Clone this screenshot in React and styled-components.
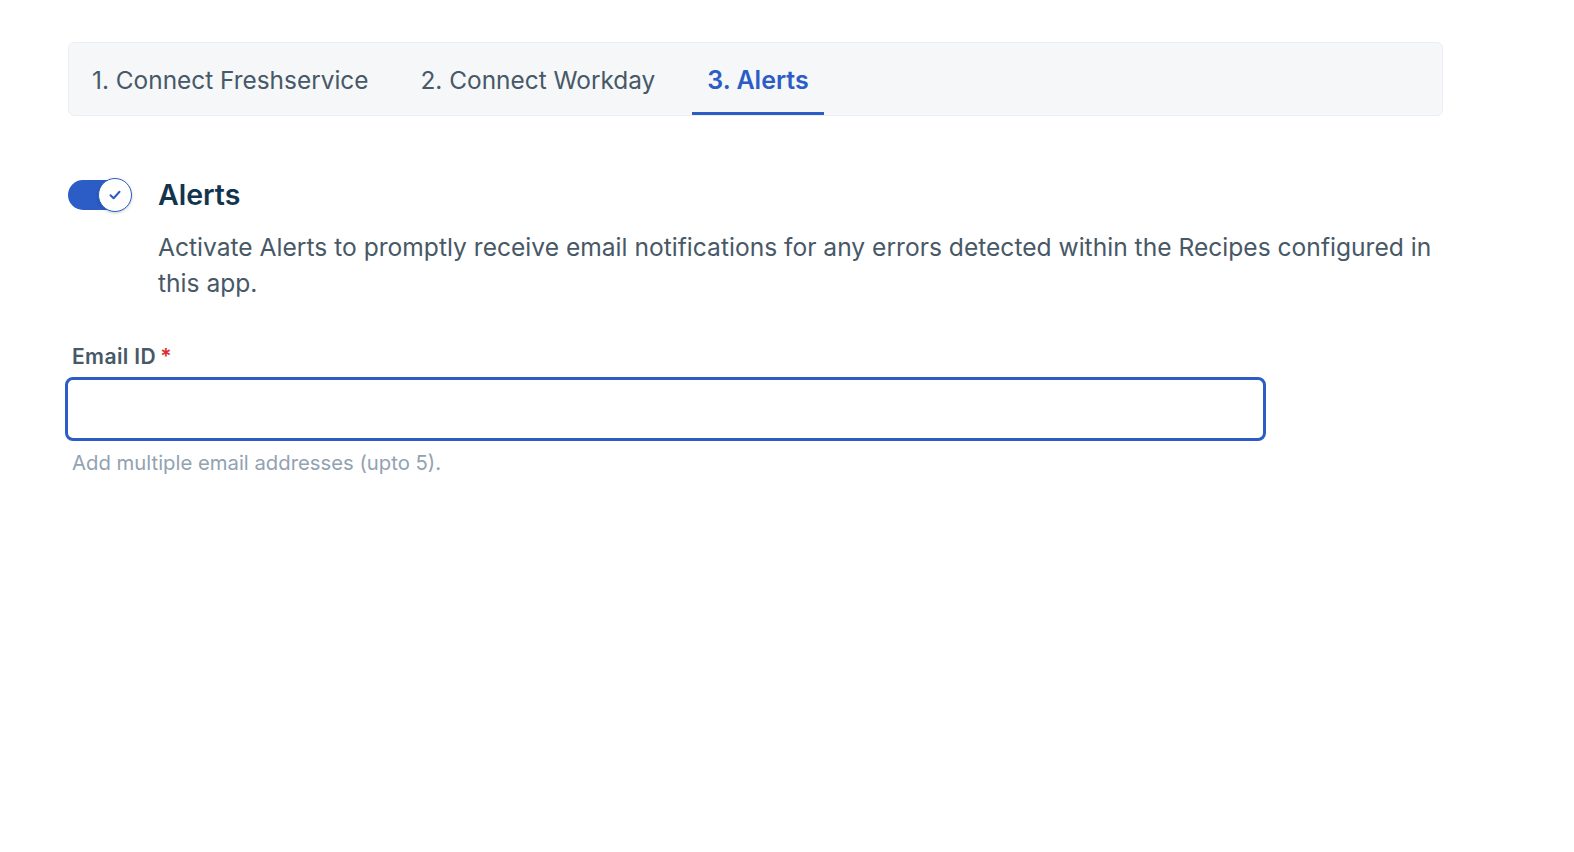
import React from "react";
import styled, { createGlobalStyle } from "styled-components";

const Global = createGlobalStyle`
  html, body { margin: 0; padding: 0; background: #fff; }
  body { font-family: Inter, "Noto Sans", sans-serif; -webkit-font-smoothing: antialiased; }
`;

const Page = styled.div`
  padding: 42px 131px 0 68px;
  display: flex;
  flex-direction: column;
`;

const TabBar = styled.div`
  display: flex;
  align-items: stretch;
  height: 72px;
  background: #f5f7f9;
  border: 1px solid #ebeff3;
  border-radius: 6px;
  padding-left: 8px;
  gap: 22px;
`;

const Tab = styled.div`
  display: flex;
  align-items: center;
  padding: 0 15px;
  font-size: ${(p) => (p.$active ? "25px" : "24.4px")};
  color: ${(p) => (p.$active ? "#2c5cc5" : "#475867")};
  font-weight: ${(p) => (p.$active ? 600 : 400)};
  border-bottom: 3px solid ${(p) => (p.$active ? "#2c5cc5" : "transparent")};
  padding-top: 4px;
`;

const Section = styled.div`
  display: grid;
  grid-template-columns: 90px 1fr;
  margin-top: 62px;
  padding-right: 6px;
`;

const Toggle = styled.div`
  position: relative;
  width: 60px;
  height: 30px;
  margin-top: 2px;
  border-radius: 15px;
  background: #2c5cc5;
`;

const Thumb = styled.div`
  position: absolute;
  right: -4px;
  top: -2px;
  width: 34px;
  height: 34px;
  border-radius: 50%;
  background: #fff;
  border: 1px solid #2c5cc5;
  box-sizing: border-box;
  box-shadow: 0 1px 3px rgba(18, 52, 77, 0.25);
  display: flex;
  align-items: center;
  justify-content: center;
`;

const Title = styled.div`
  font-size: 28.5px;
  font-weight: 600;
  color: #12344d;
  line-height: 34px;
`;

const Desc = styled.div`
  margin-top: 17px;
  font-size: 24.6px;
  line-height: 36px;
  color: #475867;
`;

const Field = styled.div`
  display: flex;
  flex-direction: column;
  margin-top: 43px;
  width: 1201px;
  margin-left: -3px;
`;

const Label = styled.label`
  font-size: 21px;
  letter-spacing: 0.4px;
  font-weight: 600;
  color: #475867;
  padding-left: 7px;
  line-height: 26px;
`;

const Req = styled.span`
  color: #d72d30;
  margin-left: 4px;
`;

const Input = styled.input`
  margin-top: 7px;
  height: 64px;
  box-sizing: border-box;
  border: 3px solid #2c5cc5;
  border-radius: 8px;
  outline: none;
  font-size: 20px;
  padding: 0 14px;
  font-family: inherit;
`;

const Hint = styled.div`
  margin-top: 10px;
  padding-left: 7px;
  font-size: 20.3px;
  color: #92a2b1;
  line-height: 24px;
`;

export default function App() {
  return (
    <>
      <Global />
      <Page>
        <TabBar>
          <Tab>1. Connect Freshservice</Tab>
          <Tab>2. Connect Workday</Tab>
          <Tab $active>3. Alerts</Tab>
        </TabBar>
        <Section>
          <Toggle>
            <Thumb>
              <svg width="16" height="16" viewBox="0 0 16 16">
                <path d="M3.5 8.2 L6.6 11.2 L12.5 4.8" fill="none" stroke="#2c5cc5" strokeWidth="2" strokeLinecap="round" strokeLinejoin="round" />
              </svg>
            </Thumb>
          </Toggle>
          <div>
            <Title>Alerts</Title>
            <Desc>
              Activate Alerts to promptly receive email notifications for any errors detected within the Recipes configured in this app.
            </Desc>
          </div>
        </Section>
        <Field>
          <Label>
            Email ID<Req>*</Req>
          </Label>
          <Input type="text" />
          <Hint>Add multiple email addresses (upto 5).</Hint>
        </Field>
      </Page>
    </>
  );
}
